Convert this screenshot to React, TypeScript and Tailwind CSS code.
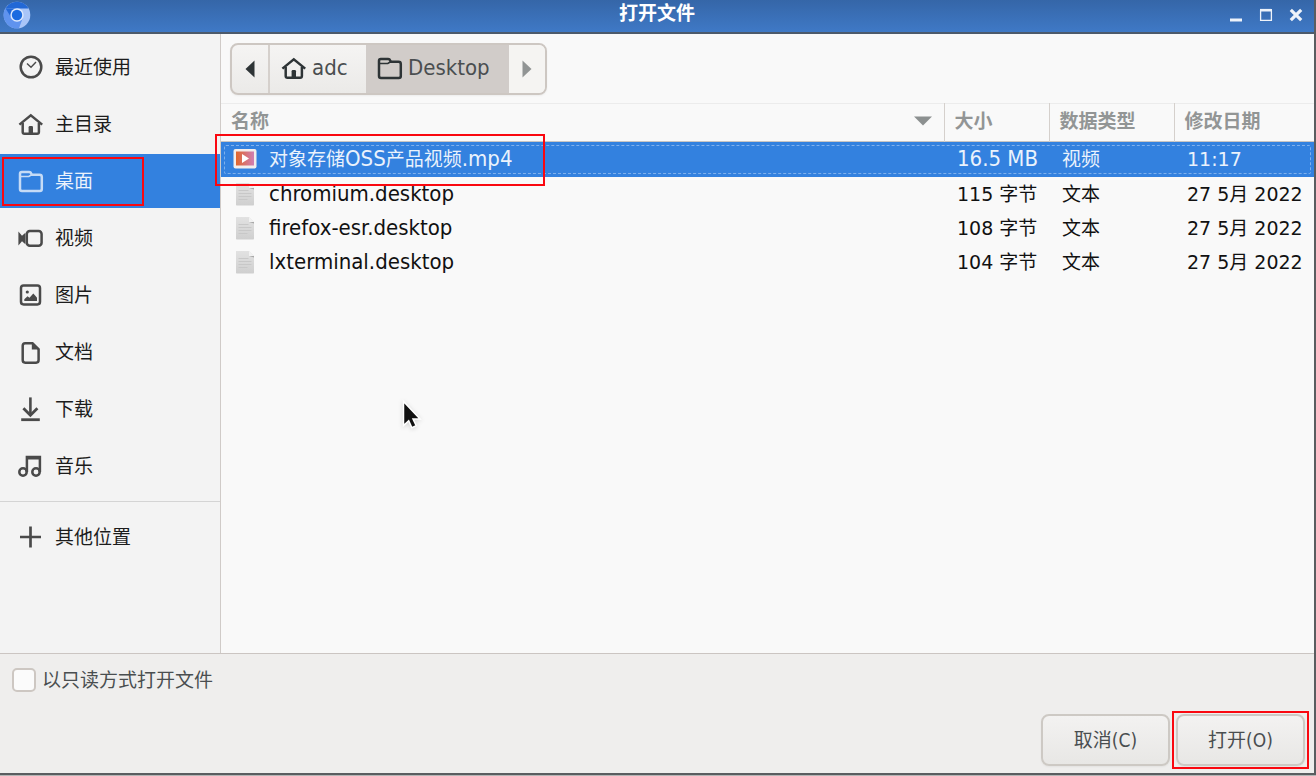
import type { ReactNode } from "react";

type IconName =
  | "recent"
  | "home"
  | "folder"
  | "video"
  | "picture"
  | "document"
  | "download"
  | "music"
  | "plus";

const glyphs: Record<IconName, ReactNode> = {
  recent: (
    <>
      <circle cx="12" cy="12" r="10.3" />
      <path d="M8 8.6l4 3.7 5-5.4" strokeWidth="1.4" />
    </>
  ),
  home: (
    <>
      <path d="M.4 12.6L11.8 3.4l11.4 9.200" />
      <path d="M3.700 11v9c0 1 .7 1.800 1.800 1.800h12.600c1.100 0 1.800-.8 1.800-1.800v-9" />
      <path d="M9.600 22v-6.700a1.300 1.300 0 011.300-1.300h1.800a1.300 1.300 0 011.300 1.300V22z" fill="currentColor" stroke="none" />
    </>
  ),
  folder: (
    <>
      <path d="M1 6V4.800C1 3.600 1.700 3 2.800 3h7.400c1 0 1.600.4 1.900 1.200l.7 1.600h7.700c1.400 0 2.300.8 2.300 2.200v12c0 1.300-.8 2-2 2H3c-1.200 0-2-.7-2-2z" />
      <path d="M1.500 7.500h8.300l2.800-1.700" strokeWidth="1.600" />
    </>
  ),
  video: (
    <>
      <rect x="7.800" y="5" width="14.800" height="14.800" rx="3" />
      <path d="M-.6 5.500L3 9.800l3.400-3v11.400l-3.400-3-3.600 4.300z" fill="currentColor" stroke="none" />
    </>
  ),
  picture: (
    <>
      <rect x="2" y="2.400" width="19" height="19" rx="2.600" />
      <circle cx="8.300" cy="9" r="1.600" fill="currentColor" stroke="none" />
      <path d="M5.300 17.900v-1.600l3.200-3 2 1.500 3.800-4.200 2.500 2.600 1.200 1.600v3.100z" fill="currentColor" stroke="none" />
    </>
  ),
  document: (
    <>
      <path d="M6.200 3.200h7.300l6.100 6v10.900c0 1.500-.9 2.600-2.500 2.600H6.200c-1.600 0-2.500-1-2.500-2.600V5.800c0-1.600.9-2.600 2.500-2.600z" />
      <path d="M12.800 2.600v6.900h7z" fill="currentColor" stroke="none" />
    </>
  ),
  download: (
    <>
      <path d="M11.400.4v17.400" strokeWidth="2.600" />
      <path d="M4.400 11.200l7 7 7-7" strokeWidth="2.800" />
      <path d="M2.200 22.700h18.600" strokeWidth="2.800" />
    </>
  ),
  music: (
    <>
      <circle cx="4" cy="18" r="3.700" />
      <circle cx="17" cy="18" r="3.700" />
      <path d="M7.900 18V3h13v15" />
      <path d="M7.900 3.800h13" strokeWidth="3.400" />
    </>
  ),
  plus: <path d="M11.500 1.500v21M1 12h21" strokeWidth="2.700" />,
};

const Icon = ({ name }: { name: IconName }) => (
  <svg
    viewBox="0 0 24 24"
    className="h-6 w-6 shrink-0 overflow-visible"
    fill="none"
    stroke="currentColor"
    strokeWidth="2.500"
    aria-hidden="true"
  >
    {glyphs[name]}
  </svg>
);

const places: { icon: IconName; label: string; active?: boolean }[] = [
  { icon: "recent", label: "最近使用" },
  { icon: "home", label: "主目录" },
  { icon: "folder", label: "桌面", active: true },
  { icon: "video", label: "视频" },
  { icon: "picture", label: "图片" },
  { icon: "document", label: "文档" },
  { icon: "download", label: "下载" },
  { icon: "music", label: "音乐" },
];

const files = [
  { name: "chromium.desktop", size: "115 字节", type: "文本", date: "27 5月 2022" },
  { name: "firefox-esr.desktop", size: "108 字节", type: "文本", date: "27 5月 2022" },
  { name: "lxterminal.desktop", size: "104 字节", type: "文本", date: "27 5月 2022" },
];

const condensed = "font-['DejaVu_Sans_Condensed','Noto_Sans_CJK_SC',sans-serif]";

const TitleBar = () => (
  <header className="flex h-[34px] items-start border-b-2 border-[#4c5a6b] bg-linear-to-b from-[#3566a8] to-[#3f79c6] px-[3px] pt-px text-white">
    <svg viewBox="0 0 28 28" className="h-7 w-7" aria-hidden="true">
      <circle cx="14" cy="14" r="13.300" fill="#a9c5f8" />
      <path d="M14 14L2.500 7.300A13.300 13.300 0 0016 27.200L19.800 17z" fill="#5f93ee" />
      <path d="M2.500 7.300A13.300 13.300 0 0125.600 7.600H14z" fill="#2268d6" />
      <path d="M2.500 7.300L8.500 17 14 7.600z" fill="#2268d6" />
      <circle cx="14" cy="14" r="6.700" fill="#dce8fd" />
      <circle cx="14" cy="14" r="5.200" fill="#1b6be0" />
    </svg>
    <h1 className="flex-1 pl-[58px] text-center text-[19px] leading-6 font-bold">打开文件</h1>
    <div className="flex gap-2 pt-[2px] pr-1">
      <button aria-label="最小化" className="flex h-6 w-[22px] items-center justify-center">
        <svg viewBox="0 0 14 14" className="h-[14px] w-[14px]" fill="#eef3fa">
          <path d="M1 10.500h12v3H1z" />
        </svg>
      </button>
      <button aria-label="最大化" className="flex h-6 w-[22px] items-center justify-center">
        <svg viewBox="0 0 14 14" className="h-[14px] w-[14px]" fill="none" stroke="#eef3fa">
          <path d="M1.600 2v10.400h10.800V2" strokeWidth="1.300" />
          <path d="M1 2.200h12" strokeWidth="2.600" />
        </svg>
      </button>
      <button aria-label="关闭" className="flex h-6 w-[22px] items-center justify-center">
        <svg viewBox="0 0 14 14" className="h-[14px] w-[14px]" fill="none" stroke="#eef3fa">
          <path d="M1.800 1.800l10.400 10.400M12.200 1.800L1.800 12.200" strokeWidth="3.200" />
        </svg>
      </button>
    </div>
  </header>
);

const Sidebar = () => (
  <nav className="flex w-[221px] shrink-0 flex-col border-r border-[#d0cbc8] bg-[#f3f3f3] pt-[6px]">
    <ul className="flex flex-col gap-[3px]">
      {places.map((place) => (
        <li key={place.label}>
          <button
            className={`relative flex h-[54px] w-full items-center gap-3 pl-[19px] ${
              place.active ? "bg-[#3381df] text-[#c5dbf6]" : "text-[#4a4a4a]"
            }`}
          >
            <Icon name={place.icon} />
            <span className={place.active ? "text-[#eaf2fc]" : "text-[#1c1c1c]"}>{place.label}</span>
            {place.active && (
              <span className="absolute top-[3px] left-[2px] h-[49px] w-[142px] border-2 border-[#fa0810]" />
            )}
          </button>
        </li>
      ))}
    </ul>
    <div className="mt-2 border-t border-[#d4d4d4] pt-2">
      <button className="flex h-[54px] w-full items-center gap-3 pl-[19px] text-[#4a4a4a]">
        <Icon name="plus" />
        <span className="text-[#1c1c1c]">其他位置</span>
      </button>
    </div>
  </nav>
);

const PathBar = () => (
  <div className={`px-[9px] pt-[9px] pb-2 ${condensed}`}>
    <div className="inline-flex h-[52px] overflow-hidden rounded-lg border-2 border-[#cdc7c2] bg-linear-to-b from-[#f5f4f3] to-[#ebeae8] align-top text-[22px] text-[#4a4e50] shadow-xs">
      <button aria-label="后退" className="flex w-[38px] items-center justify-center border-r-2 border-[#d5d0cc]">
        <svg viewBox="0 0 10 18" className="h-[18px] w-[10px]" fill="#2e3436">
          <path d="M9.500.5v17L.5 9z" />
        </svg>
      </button>
      <button className="flex w-[96px] items-center gap-[6px] pb-[2px] pl-3">
        <span className="text-[#2e3436]">
          <Icon name="home" />
        </span>
        adc
      </button>
      <button className="flex w-[143px] items-center gap-[6px] bg-[#d1ccc9] pb-[2px] pl-3">
        <span className="text-[#2e3436]">
          <Icon name="folder" />
        </span>
        Desktop
      </button>
      <button aria-label="前进" className="flex w-[36px] items-center justify-center bg-[#f5f4f2]">
        <svg viewBox="0 0 10 18" className="h-[18px] w-[10px]" fill="#919494">
          <path d="M.5.500v17l9-8.500z" />
        </svg>
      </button>
    </div>
  </div>
);

const VideoFileIcon = () => (
  <svg viewBox="0 0 24 24" className="h-6 w-6 shrink-0" aria-hidden="true">
    <defs>
      <linearGradient id="film">
        <stop offset="0" stopColor="#e0662c" />
        <stop offset="1" stopColor="#d07fb4" />
      </linearGradient>
    </defs>
    <rect x=".5" y="2" width="23" height="19.500" rx="2" fill="#f3eeec" />
    <rect x="3" y="4.500" width="18" height="14" fill="url(#film)" />
    <path d="M9 7v9l7-4.500z" fill="#fff" />
  </svg>
);

const TextFileIcon = () => (
  <svg viewBox="0 0 24 24" className="h-6 w-6 shrink-0" aria-hidden="true">
    <defs>
      <linearGradient id="sheet" x2="0" y2="1">
        <stop offset="0" stopColor="#e2e2e2" />
        <stop offset="1" stopColor="#cfcfcf" />
      </linearGradient>
    </defs>
    <path d="M3 1h13l5 5v16.500c0 .6-.4 1-1 1H4c-.6 0-1-.4-1-1z" fill="url(#sheet)" />
    <path d="M16 1l5 5h-5z" fill="#f2f2f2" />
    <path d="M16 6h5v1.500z" fill="#a8a8a8" />
    <path d="M5.500 8.500h10M5.500 11.500h13M5.500 14.500h13M5.500 17.500h9" stroke="#c8c8c8" />
  </svg>
);

const FileTable = () => (
  <table className="w-full table-fixed border-collapse text-left whitespace-nowrap text-[#111]">
    <colgroup>
      <col />
      <col className="w-[105px]" />
      <col className="w-[125px]" />
      <col className="w-[140px]" />
    </colgroup>
    <thead>
      <tr className="h-[38px] border-t border-b border-t-[#ececec] border-b-[#c9c5c2] text-[#929595]">
        <th className="pr-3 pb-[3px] pl-[10px]">
          <span className="flex items-center justify-between">
            名称
            <svg viewBox="0 0 18 10" className="h-[10px] w-[18px]" fill="#8c9090" aria-hidden="true">
              <path d="M0 .5h18L9 9.500z" />
            </svg>
          </span>
        </th>
        <th className="border-l border-[#d5d0cc] pb-[3px] pl-[10px]">大小</th>
        <th className="border-l border-[#d5d0cc] pb-[3px] pl-[10px]">数据类型</th>
        <th className="border-l border-[#d5d0cc] pb-[3px] pl-[10px]">修改日期</th>
      </tr>
    </thead>
    <tbody>
      <tr className="relative h-[35px] bg-[#3381df] text-[#eaf2fc]">
        <td className="pl-3">
          <span className="flex items-center gap-3">
            <VideoFileIcon />
            <span className="leading-[30px]">
              对象存储<span className={`text-[22px] ${condensed}`}>OSS</span>产品视频
              <span className={`text-[22px] ${condensed}`}>.mp4</span>
            </span>
          </span>
          <span className="pointer-events-none absolute inset-x-[3px] inset-y-[3px] rounded-xs border border-dashed border-[#7fb0ec]" />
          <span className="pointer-events-none absolute -top-2 -left-[6px] h-[52px] w-[330px] border-2 border-[#fa0810]" />
        </td>
        <td className={`pl-[13px] text-[22px] leading-[30px] ${condensed}`}>16.5 MB</td>
        <td className="pl-[13px]">视频</td>
        <td className="pl-[13px]">11:17</td>
      </tr>
      {files.map((file) => (
        <tr key={file.name} className="h-[34px]">
          <td className="pl-3">
            <span className="flex items-center gap-3">
              <TextFileIcon />
              <span className={`text-[22px] leading-[30px] ${condensed}`}>{file.name}</span>
            </span>
          </td>
          <td className="pl-[13px]">{file.size}</td>
          <td className="pl-[13px]">{file.type}</td>
          <td className="pl-[13px]">{file.date}</td>
        </tr>
      ))}
    </tbody>
  </table>
);

const actionButton =
  "h-[52px] w-[129px] rounded-lg border-2 border-[#cdc9c4] bg-linear-to-b from-[#f3f2f1] to-[#e8e7e5] shadow-xs";

const Footer = () => (
  <footer className={`border-t border-[#cbc5c2] bg-[#efeeed] px-[9px] pb-[7px] text-[#4a4e50] ${condensed}`}>
    <label className="flex h-[52px] w-fit items-center gap-[6px] pl-[3px]">
      <input
        type="checkbox"
        className="h-6 w-6 appearance-none rounded-[5px] border-2 border-[#cdc7c2] bg-[#fbfbfb] checked:bg-[#3381df]"
      />
      以只读方式打开文件
    </label>
    <div className="mt-2 flex justify-end gap-[6px]">
      <button className={actionButton}>取消(C)</button>
      <div className="relative">
        <button className={actionButton}>打开(O)</button>
        <span className="pointer-events-none absolute -inset-x-1 -inset-y-[3px] border-2 border-[#fa0810]" />
      </div>
    </div>
  </footer>
);

const Pointer = () => (
  <svg
    viewBox="0 0 20 30"
    className="pointer-events-none absolute top-[400px] left-[402px] h-[30px] w-5 overflow-visible drop-shadow-sm"
    aria-hidden="true"
  >
    <path d="M1.500 1.500v24l5.200-4.800 3.200 7 4.300-2-3.200-6.700h7z" fill="#111" stroke="#fff" strokeWidth="1.500" />
  </svg>
);

const App = () => (
  <div className="min-h-screen bg-[#b5b5b5] pb-px">
    <div className="relative flex min-h-[calc(100vh-1px)] flex-col border-r-2 border-b-2 border-[#5a5d60] bg-[#f9f9f9] font-['DejaVu_Sans','Noto_Sans_CJK_SC',sans-serif] text-[19px] leading-6">
      <TitleBar />
      <div className="flex flex-1">
        <Sidebar />
        <main className="min-w-0 flex-1">
          <PathBar />
          <FileTable />
        </main>
      </div>
      <Footer />
      <Pointer />
    </div>
  </div>
);

export default App;
